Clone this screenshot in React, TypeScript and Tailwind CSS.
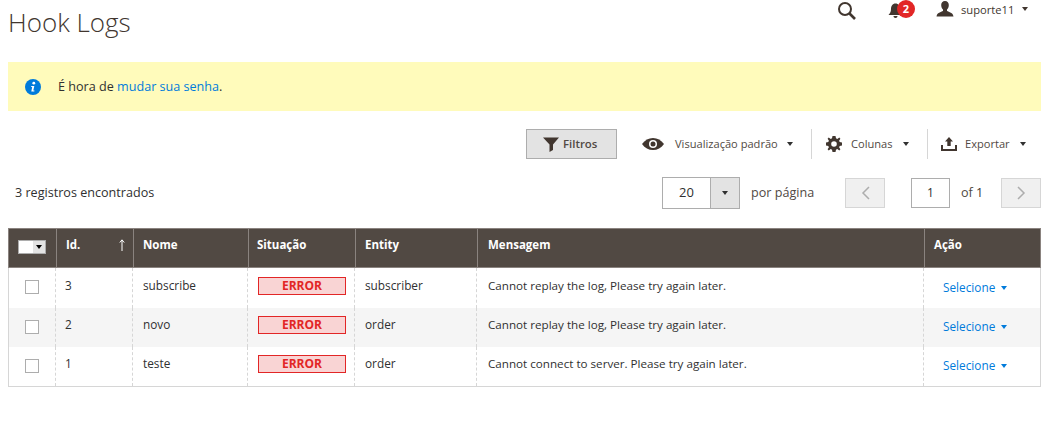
import React from 'react';

const Caret = ({ className = 'border-t-[#303030]' }: { className?: string }) => (
  <span className={`inline-block w-0 h-0 border-x-[3.5px] border-x-transparent border-t-[4px] ${className}`} />
);

const rows = [
  { id: '3', nome: 'subscribe', entity: 'subscriber', msg: 'Cannot replay the log, Please try again later.', bg: 'bg-white', h: 'h-[40px]' },
  { id: '2', nome: 'novo', entity: 'order', msg: 'Cannot replay the log, Please try again later.', bg: 'bg-[#f5f5f5]', h: 'h-[39px]' },
  { id: '1', nome: 'teste', entity: 'order', msg: 'Cannot connect to server. Please try again later.', bg: 'bg-white', h: 'h-[39px]' },
];

const App = () => {
  return (
    <div className="w-[1053px] h-[428px] bg-white overflow-hidden font-['Open_Sans',sans-serif] text-[12px] text-[#303030]">
      {/* Header */}
      <div className="flex h-[62px] pl-2">
        <h1 className="text-[26px] leading-[32px] pt-[6px] font-light text-[#41362f]">Hook Logs</h1>
        <div className="ml-auto flex items-start">
          <svg className="mt-[1px] mr-[31px]" width="20" height="19" viewBox="0 0 20 19" fill="none" stroke="#41362f" strokeWidth="2">
            <circle cx="8" cy="8" r="6" />
            <path d="M12.5 12.5L18 18" strokeWidth="2.6" />
          </svg>
          <div className="relative w-[48px] h-[20px]">
            <svg className="mt-[3px]" width="15" height="16" viewBox="0 0 15 16" fill="#41362f">
              <path d="M7.5 0.5C4.5 0.5 3 3 3 6C3 9 2 10.500 0.5 12H14.500C13 10.500 12 9 12 6C12 3 10.500 0.5 7.500 0.500Z" />
              <path d="M5.500 13H9.500C9.500 14.200 8.700 15 7.500 15C6.300 15 5.500 14.200 5.500 13Z" />
            </svg>
            <span className="absolute left-[9px] top-0 w-[18px] h-[18px] rounded-full bg-[#e22626] text-white text-[11px] leading-[18px] font-bold text-center">2</span>
          </div>
          <svg className="mt-[1px]" width="18" height="16" viewBox="0 0 18 16" fill="#41362f">
            <path d="M9 0C6.500 0 5.200 1.700 5.200 4C5.200 6 6 7.700 7 8.500V10C5 11 1 11.500 0.500 15.500H17.500C17 11.500 13 11 11 10V8.500C12 7.700 12.800 6 12.800 4C12.800 1.700 11.500 0 9 0Z" />
          </svg>
          <span className="ml-[7px] w-[54px] mt-[1px] text-[11.2px] leading-[18px] text-[#41362f]">suporte11</span>
          <span className="ml-[7px] mr-[25px] mt-[7px] flex"><Caret className="border-t-[#41362f]" /></span>
        </div>
      </div>

      {/* Notice */}
      <div className="ml-2 w-[1033px] h-[49px] bg-[#fffbbb] flex items-center pl-[17px] text-[12.6px] text-[#303030]">
        <svg width="16" height="16" viewBox="0 0 16 16">
          <circle cx="8" cy="8" r="8" fill="#007bdb" />
          <circle cx="8.800" cy="4.200" r="1.400" fill="#fff" />
          <path d="M6.300 7H9.300L8.300 11.500H9.500L9.300 12.500H6.300L7.200 8H6.100Z" fill="#fff" />
        </svg>
        <span className="ml-[17px] pt-[1px]">É hora de <span className="text-[#007bdb]">mudar sua senha</span>.</span>
      </div>

      {/* Toolbar */}
      <div className="flex items-center h-[32px] mt-[17px] pl-[526px] text-[11.1px]">
        <button className="w-[91px] h-[30px] bg-[#e3e3e3] border border-[#adadad] flex items-center pl-[16px] text-[11.4px] font-semibold text-[#514943]">
          <svg className="mr-[4px]" width="16" height="15" viewBox="0 0 16 15" fill="#41362f">
            <path d="M0 0.500H16L10 7.500V13L6.500 15V7.500Z" />
          </svg>
          Filtros
        </button>
        <svg className="ml-[25px]" width="22" height="12" viewBox="0 0 22 12">
          <path d="M0 6C3 2 6.500 0 11 0C15.500 0 19 2 22 6C19 10 15.500 12 11 12C6.500 12 3 10 0 6Z" fill="#41362f" />
          <circle cx="11" cy="6" r="4" fill="#fff" />
          <circle cx="11" cy="6" r="2.500" fill="#41362f" />
        </svg>
        <span className="ml-[11px] w-[102px] pt-[1px] whitespace-nowrap text-[#514943]">Visualização padrão</span>
        <span className="ml-[10px] flex"><Caret /></span>
        <span className="ml-[18px] w-px h-[30px] bg-[#d6d6d6]" />
        <svg className="ml-[14px]" width="16" height="16" viewBox="0 0 16 16" fill="#41362f">
          <path fillRule="evenodd" d="M6.500 0H9.500L10 2.300L11.300 2.900L13.300 1.600L14.400 2.700L13.100 4.700L13.700 6L16 6.500V9.500L13.700 10L13.100 11.300L14.400 13.300L13.300 14.400L11.300 13.100L10 13.700L9.500 16H6.500L6 13.700L4.700 13.100L2.700 14.400L1.600 13.300L2.900 11.300L2.300 10L0 9.500V6.500L2.300 6L2.900 4.700L1.600 2.700L2.700 1.600L4.700 2.900L6 2.300ZM8 5.200A2.800 2.800 0 1 0 8 10.800A2.800 2.800 0 1 0 8 5.200Z" />
        </svg>
        <span className="ml-[9px] w-[42px] pt-[1px] text-[#514943]">Colunas</span>
        <span className="ml-[10px] flex"><Caret /></span>
        <span className="ml-[18px] w-px h-[30px] bg-[#d6d6d6]" />
        <svg className="ml-[13px]" width="16" height="14" viewBox="0 0 16 14" fill="#41362f">
          <path d="M8 0L12 4.500H9.700V9H6.300V4.500H4Z" />
          <path d="M0 8H2V12H14V8H16V14H0Z" />
        </svg>
        <span className="ml-[8px] w-[45px] pt-[1px] text-[#514943]">Exportar</span>
        <span className="ml-[10px] flex"><Caret /></span>
      </div>

      {/* Pager */}
      <div className="flex items-center h-[32px] mt-[17px] pl-[15px] text-[12.6px]">
        <span className="w-[647px] text-[#303030]">3 registros encontrados</span>
        <div className="flex w-[78px] h-[32px] border border-[#adadad]">
          <span className="w-[47px] flex items-center justify-center text-[13px]">20</span>
          <span className="flex-1 bg-[#e3e3e3] border-l border-[#adadad] flex items-center justify-center"><Caret /></span>
        </div>
        <span className="ml-[11px] w-[63px] whitespace-nowrap text-[#514943]">por página</span>
        <span className="ml-[31px] w-[40px] h-[30px] bg-[#f0f0f0] border border-[#d6d6d6] flex items-center justify-center">
          <svg width="9" height="14" viewBox="0 0 9 14" fill="none" stroke="#adadad" strokeWidth="1.500"><path d="M8 1L2 7L8 13" /></svg>
        </span>
        <span className="ml-[26px] w-[39px] h-[30px] border border-[#adadad] flex items-center justify-center text-[12px]">1</span>
        <span className="ml-[11px] w-[22px] whitespace-nowrap text-[#514943]">of <span className="text-[#41362f]">1</span></span>
        <span className="ml-[18px] w-[40px] h-[30px] bg-[#f0f0f0] border border-[#d6d6d6] flex items-center justify-center">
          <svg width="9" height="14" viewBox="0 0 9 14" fill="none" stroke="#adadad" strokeWidth="1.500"><path d="M1 1L7 7L1 13" /></svg>
        </span>
      </div>

      {/* Grid */}
      <div className="ml-2 mt-[19px] w-[1033px] border-x border-b border-[#d6d6d6]">
        <div className="flex h-[40px] -mx-px bg-[#514943] border border-[#8a837f] text-white font-bold text-[11.5px] leading-[32px]">
          <div className="w-[48px] border-r border-[#8a837f] flex items-center pl-[9px] pb-[2px]">
            <span className="flex w-[28px] h-[14px] bg-[#e3e3e3] border border-[#adadad]">
              <span className="w-[14px] bg-white" />
              <span className="flex-1 flex items-center justify-center"><Caret className="border-t-[#000]" /></span>
            </span>
          </div>
          <div className="w-[77px] border-r border-[#8a837f] pl-[9px] flex items-start">
            Id.
            <svg className="ml-auto mr-[8px] mt-[10px]" width="6" height="12" viewBox="0 0 6 12" fill="none" stroke="#fff" strokeWidth="1">
              <path d="M3 12V1M0.800 3.500L3 0.800L5.200 3.500" />
            </svg>
          </div>
          <div className="w-[115px] border-r border-[#8a837f] pl-[9px]">Nome</div>
          <div className="w-[107px] border-r border-[#8a837f] pl-[8px]">Situação</div>
          <div className="w-[122px] border-r border-[#8a837f] pl-[9px]">Entity</div>
          <div className="w-[447px] border-r border-[#8a837f] pl-[10px]">Mensagem</div>
          <div className="flex-1 pl-[9px]">Ação</div>
        </div>
        {rows.map((row) => (
          <div key={row.id} className={`flex ${row.h} ${row.bg} items-stretch text-[11.8px]`}>
            <div className="w-[48px] -ml-px border-r border-dashed border-[#d6d6d6] flex items-center justify-center pb-[2px]">
              <span className="w-[14px] h-[14px] bg-white border border-[#adadad]" />
            </div>
            <div className="w-[77px] border-r border-dashed border-[#d6d6d6] pl-[9px] flex items-center pb-[5px]">{row.id}</div>
            <div className="w-[115px] border-r border-dashed border-[#d6d6d6] pl-[10px] flex items-center pb-[5px]">{row.nome}</div>
            <div className="w-[107px] border-r border-dashed border-[#d6d6d6] pl-[10px] flex items-center pb-[5px]">
              <span className="w-[88px] h-[18px] bg-[#f9d4d4] border border-[#e22626] text-[#e22626] text-[12px] font-bold text-center leading-[16px]">ERROR</span>
            </div>
            <div className="w-[122px] border-r border-dashed border-[#d6d6d6] pl-[10px] flex items-center pb-[5px]">{row.entity}</div>
            <div className="w-[447px] border-r border-dashed border-[#d6d6d6] pl-[11px] flex items-center pb-[5px] text-[11.65px]">{row.msg}</div>
            <div className="flex-1 pl-[19px] flex items-center pb-[1px] text-[#007bdb]">
              Selecione<span className="ml-[6px] flex"><Caret className="border-t-[#007bdb]" /></span>
            </div>
          </div>
        ))}
      </div>
    </div>
  );
};

export default App;
